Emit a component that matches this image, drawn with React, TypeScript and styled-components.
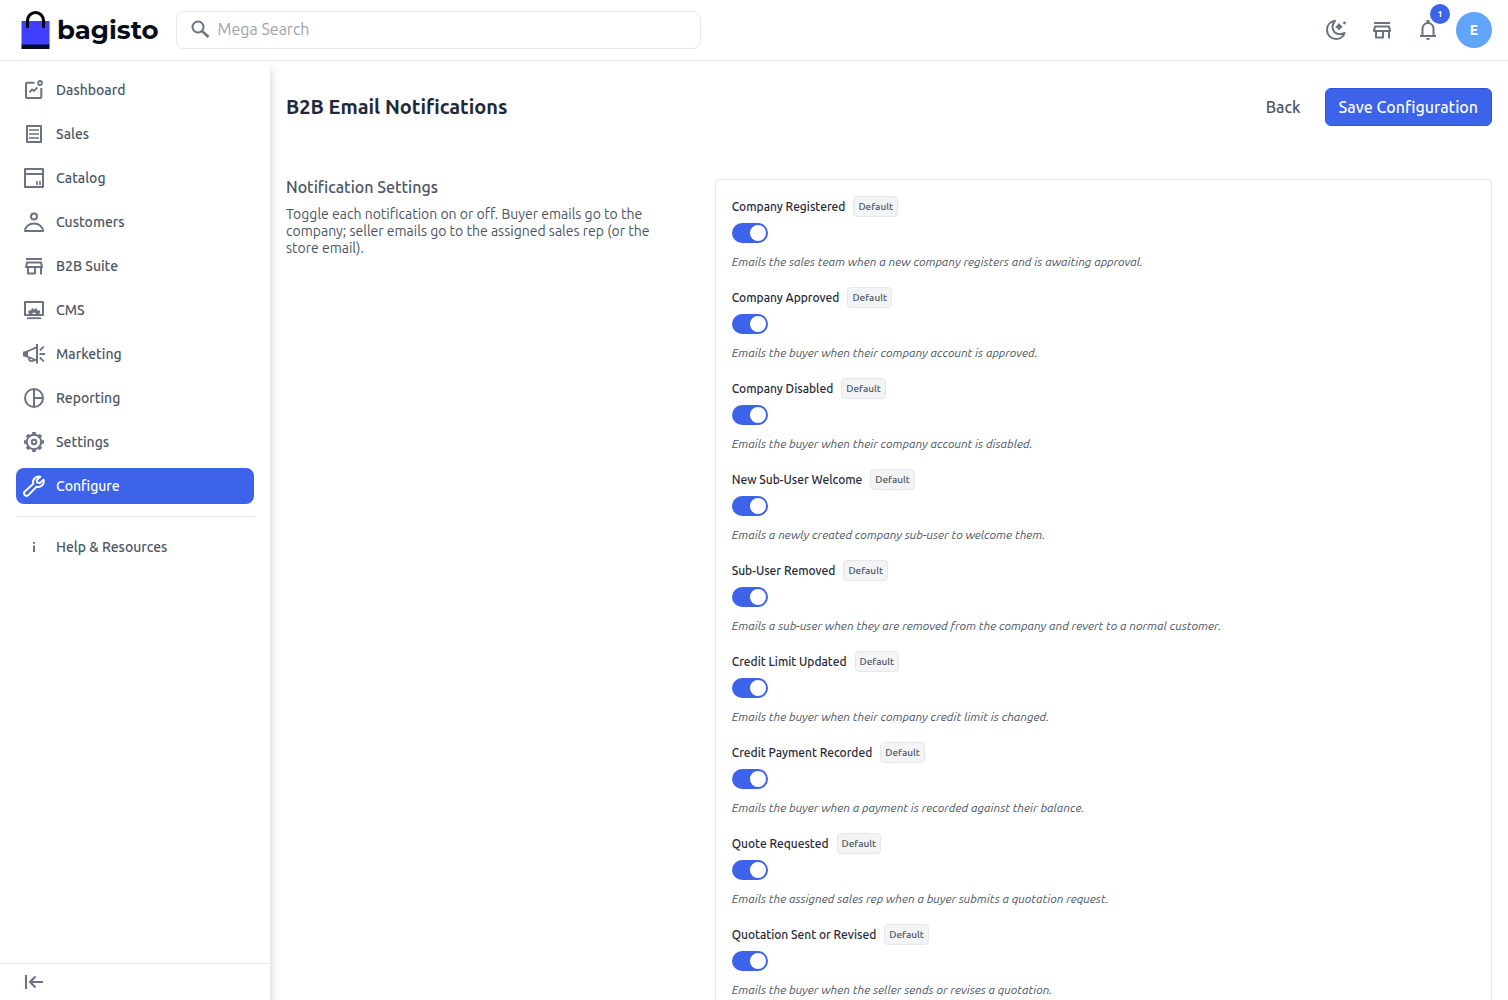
import React, { useState } from "react";
import styled, { createGlobalStyle, css } from "styled-components";

const color = {
  text: "#4b5563",
  strong: "#1f2937",
  icon: "#6b7280",
  line: "#e5e7eb",
  brand: "#3c63ea",
};

const GlobalStyle = createGlobalStyle`
  *, *::before, *::after { box-sizing: border-box; }
  body { margin: 0; background: #fff; color: ${color.text}; font-family: Ubuntu, "Open Sans", "Noto Sans", sans-serif; }
  button, input { font: inherit; color: inherit; }
  h1, h2, p, ul { margin: 0; padding: 0; }
  ul { list-style: none; }
`;

const Shell = styled.div`
  display: grid;
  grid-template-rows: auto minmax(0, 1fr);
  height: 100vh;
`;

const Header = styled.header`
  display: flex;
  align-items: center;
  justify-content: space-between;
  padding: 11px 16px;
  border-bottom: 1px solid ${color.line};
  background: #fff;
`;

const HeaderStart = styled.div`
  display: flex;
  align-items: center;
  gap: 17px;
  flex: 1;
`;

const Logo = styled.a`
  display: flex;
  align-items: center;
  gap: 7px;
  padding-left: 5px;
  color: #060c18;
  font: 700 26px/32px Montserrat, "Noto Sans", sans-serif;
  text-decoration: none;
`;

const SearchBox = styled.label`
  display: flex;
  align-items: center;
  gap: 5px;
  width: 100%;
  max-width: 525px;
  height: 38px;
  padding: 0 12px;
  border: 1px solid ${color.line};
  border-radius: 8px;
  color: ${color.icon};
`;

const SearchInput = styled.input`
  flex: 1;
  min-width: 0;
  padding: 0 0 2px;
  border: 0;
  outline: 0;
  background: transparent;
  font-size: 16px;
  line-height: 24px;
  &::placeholder { color: #9ca3af; opacity: 1; }
`;

const HeaderEnd = styled.div`
  display: flex;
  align-items: center;
  gap: 10px;
`;

const IconButton = styled.button`
  position: relative;
  display: grid;
  place-items: center;
  width: 36px;
  height: 36px;
  padding: 0;
  border: 0;
  border-radius: 6px;
  background: transparent;
  color: ${color.icon};
  cursor: pointer;
`;

const Count = styled.span`
  position: absolute;
  top: -8px;
  right: -4px;
  width: 20px;
  height: 20px;
  border-radius: 50%;
  background: ${color.brand};
  color: #fff;
  font-size: 9px;
  font-weight: 600;
  line-height: 20px;
  text-align: center;
`;

const Avatar = styled.button`
  width: 36px;
  height: 36px;
  padding: 0;
  border: 0;
  border-radius: 50%;
  background: #60a5fa;
  color: #fff;
  font-size: 14px;
  font-weight: 600;
  cursor: pointer;
`;

const Body = styled.div`
  display: grid;
  grid-template-columns: 270px minmax(0, 1fr);
`;

const Sidebar = styled.aside`
  display: flex;
  flex-direction: column;
  min-height: 0;
  background: #fff;
  box-shadow: 0 8px 10px 0 rgba(0, 0, 0, 0.2);
`;

const Nav = styled.nav`
  flex: 1;
  min-height: 0;
  overflow-y: auto;
  padding: 11px 16px;
`;

const NavList = styled.ul`
  display: grid;
  gap: 8px;
  & + & {
    margin-top: 12px;
    padding-top: 12px;
    border-top: 1px solid ${color.line};
  }
`;

const NavLink = styled.a<{ $active?: boolean }>`
  display: flex;
  align-items: center;
  gap: 10px;
  height: 36px;
  padding: 0 6px;
  border-radius: 8px;
  color: ${color.text};
  font-size: 14px;
  font-weight: 500;
  line-height: 20px;
  text-decoration: none;
  svg { color: ${color.icon}; }
  ${(p) => p.$active && css`
    background: ${color.brand};
    color: #fff;
    svg { color: #fff; }
  `}
`;

const Collapse = styled.button`
  display: flex;
  align-items: center;
  height: 37px;
  padding: 0 22px;
  border: 0;
  border-top: 1px solid ${color.line};
  background: #fff;
  color: ${color.icon};
  cursor: pointer;
`;

const Main = styled.main`
  min-height: 0;
  overflow-y: auto;
  scrollbar-width: none;
  padding: 27px 16px 24px;
`;

const TitleBar = styled.div`
  display: flex;
  align-items: center;
  justify-content: space-between;
`;

const Title = styled.h1`
  color: ${color.strong};
  font-size: 20px;
  font-weight: 600;
  line-height: 28px;
`;

const Actions = styled.div`
  display: flex;
  align-items: center;
  gap: 12px;
`;

const BackLink = styled.a`
  padding: 6px 12px;
  color: ${color.text};
  font-size: 16px;
  font-weight: 500;
  line-height: 24px;
  text-decoration: none;
`;

const SaveButton = styled.button`
  padding: 6px 13px;
  border: 1px solid #2f55dc;
  border-radius: 6px;
  background: ${color.brand};
  color: #f9fafb;
  font-size: 16px;
  font-weight: 500;
  line-height: 24px;
  cursor: pointer;
`;

const Section = styled.section`
  display: grid;
  grid-template-columns: minmax(0, 1fr) minmax(0, 2fr);
  gap: 40px;
  margin-top: 53px;
`;

const Intro = styled.div`
  display: grid;
  gap: 11px;
  align-content: start;
`;

const IntroTitle = styled.h2`
  font-size: 16px;
  font-weight: 500;
  line-height: 16px;
`;

const IntroText = styled.p`
  font-size: 14px;
  line-height: 17px;
`;

const Card = styled.div`
  display: grid;
  gap: 17px;
  padding: 16px;
  border: 1px solid ${color.line};
  border-radius: 4px;
  background: #fff;
`;

const Setting = styled.div`
  display: grid;
  gap: 6px;
  justify-items: start;
`;

const SettingHead = styled.div`
  display: flex;
  align-items: center;
  gap: 8px;
`;

const SettingLabel = styled.label`
  color: ${color.strong};
  font-size: 12px;
  font-weight: 500;
  line-height: 18px;
`;

const Tag = styled.span`
  padding: 2px 4px;
  border: 1px solid ${color.line};
  border-radius: 4px;
  background: #f3f4f6;
  font-size: 10px;
  font-weight: 500;
  line-height: 15px;
`;

const Switch = styled.input`
  appearance: none;
  width: 36px;
  height: 20px;
  margin: 0;
  padding: 2px;
  border-radius: 10px;
  background: #e5e7eb;
  cursor: pointer;
  &::before {
    content: "";
    display: block;
    width: 16px;
    height: 16px;
    border-radius: 50%;
    background: #fff;
  }
  &:checked { background: ${color.brand}; }
  &:checked::before { margin-left: 16px; }
`;

const Hint = styled.p`
  padding-top: 5px;
  font-size: 12px;
  font-style: italic;
  line-height: 16px;
`;

const Svg = ({ width = 2, children }: { width?: number; children: React.ReactNode }) => (
  <svg width="24" height="24" viewBox="0 0 24 24" fill="none" stroke="currentColor" strokeWidth={width} aria-hidden="true">
    {children}
  </svg>
);

const BagMark = () => (
  <svg width="29" height="38" viewBox="0 0 29 38" aria-hidden="true">
    <path d="M0.5 10h28v24h-28z" fill="#3f3fff" />
    <path d="M0.5 33.5h28V38h-28z" fill="#060c28" />
    <path d="M6.5 15.5V9.5a8 8 0 0 1 16 0v6" fill="none" stroke="#000" strokeWidth="3" strokeLinecap="round" />
  </svg>
);

const StoreIcon = () => (
  <Svg>
    <path d="M4 5h16M5 8.5h14l1 4.5H4zM6 13v6.5h7V13M19 13v7.5" strokeLinejoin="round" />
  </Svg>
);

const navItems: { label: string; icon: React.ReactNode }[] = [
  {
    label: "Dashboard",
    icon: (
      <Svg>
        <path d="M12.5 4.7H5a1 1 0 0 0-1 1V19a1 1 0 0 0 1 1h13.3a1 1 0 0 0 1-1V10" />
        <circle cx="18" cy="5" r="2" strokeWidth="1.8" />
        <path d="M7.5 14.3l2.6-2.8 2 1.3 3.2-3.3" strokeWidth="1.8" />
      </Svg>
    ),
  },
  {
    label: "Sales",
    icon: (
      <Svg>
        <rect x="5" y="4" width="14" height="16" strokeLinejoin="round" />
        <path d="M7 8h10M7 12h10M7 16h10" strokeWidth="1.6" />
      </Svg>
    ),
  },
  {
    label: "Catalog",
    icon: (
      <Svg>
        <rect x="3" y="3" width="18" height="18" strokeLinejoin="round" />
        <path d="M3 8h18" />
        <path d="M15 15v4M18 15v4" strokeWidth="1.6" />
      </Svg>
    ),
  },
  {
    label: "Customers",
    icon: (
      <Svg>
        <circle cx="12" cy="6.5" r="3" />
        <path d="M3 21c0-4.2 4-7.5 9-7.5s9 3.300 9 7.500z" strokeLinejoin="round" />
      </Svg>
    ),
  },
  { label: "B2B Suite", icon: <StoreIcon /> },
  {
    label: "CMS",
    icon: (
      <Svg>
        <rect x="3" y="4" width="18" height="13" strokeLinejoin="round" />
        <path d="M5 20.2h14" strokeWidth="1.8" />
        <path
          d="M7 16.5v-1.3l-1-.9.9-2 1.700.3.900-.9V10.200h1.300l.7 1h1.400l.7-1h1.300v1.500l.9.900 1.700-.3.900 2-1 .9v1.300h-3.400a2 2 0 0 0-4 0z"
          fill="currentColor"
          stroke="none"
        />
      </Svg>
    ),
  },
  {
    label: "Marketing",
    icon: (
      <Svg width={1.8}>
        <path d="M15 2v19.5" strokeWidth="2" />
        <path d="M15 5.2L5 9.5v5l10 4" />
        <path d="M7 15.5c0 2 .8 3.700 2.500 3.700 1.300 0 3-.4 3.500-1.500" />
        <path d="M1 9.8l4.8-1.3v7L1 14.200z" fill="currentColor" stroke="none" />
        <path d="M17.5 12H23M17.8 8.500l4-3.800M17.800 15.500l4 3.800" />
      </Svg>
    ),
  },
  {
    label: "Reporting",
    icon: (
      <Svg>
        <circle cx="12" cy="12" r="9" />
        <path d="M12 3v18M12 12h9" />
      </Svg>
    ),
  },
  {
    label: "Settings",
    icon: (
      <Svg>
        <circle cx="12" cy="12" r="2.2" />
        <circle cx="12" cy="12" r="7.2" />
        <path
          d="M12 2v2.500M12 19.500V22M2 12h2.500M19.500 12H22M5 5l1.800 1.800M17.200 17.200L19 19M19 5l-1.800 1.800M6.800 17.200L5 19"
          strokeWidth="3.6"
        />
      </Svg>
    ),
  },
  {
    label: "Configure",
    icon: (
      <Svg>
        <path
          strokeLinejoin="round"
          d="M18.3 2.7a5.6 5.6 0 0 0-7 7L2.8 17.6a2.3 2.3 0 0 0 0 3.500 2.300 2.300 0 0 0 3.500 0l8.200-8.300a5.700 5.700 0 0 0 7-7.200l-3.600 3.500-2.700-.5-.5-2.500z"
        />
      </Svg>
    ),
  },
];

const notifications: [string, string][] = [
  ["Company Registered", "Emails the sales team when a new company registers and is awaiting approval."],
  ["Company Approved", "Emails the buyer when their company account is approved."],
  ["Company Disabled", "Emails the buyer when their company account is disabled."],
  ["New Sub-User Welcome", "Emails a newly created company sub-user to welcome them."],
  ["Sub-User Removed", "Emails a sub-user when they are removed from the company and revert to a normal customer."],
  ["Credit Limit Updated", "Emails the buyer when their company credit limit is changed."],
  ["Credit Payment Recorded", "Emails the buyer when a payment is recorded against their balance."],
  ["Quote Requested", "Emails the assigned sales rep when a buyer submits a quotation request."],
  ["Quotation Sent or Revised", "Emails the buyer when the seller sends or revises a quotation."],
];

function NotificationSetting({ name, hint }: { name: string; hint: string }) {
  const [on, setOn] = useState(true);
  const id = name.toLowerCase().replace(/\s+/g, "-");
  return (
    <Setting>
      <SettingHead>
        <SettingLabel htmlFor={id}>{name}</SettingLabel>
        <Tag>Default</Tag>
      </SettingHead>
      <Switch id={id} type="checkbox" role="switch" checked={on} onChange={() => setOn(!on)} />
      <Hint>{hint}</Hint>
    </Setting>
  );
}

export default function App() {
  return (
    <Shell>
      <GlobalStyle />
      <Header>
        <HeaderStart>
          <Logo href="#">
            <BagMark />
            bagisto
          </Logo>
          <SearchBox>
            <Svg>
              <circle cx="9" cy="9" r="5.5" />
              <path d="M13 13l6.5 6" strokeWidth="2.6" />
            </Svg>
            <SearchInput type="text" placeholder="Mega Search" aria-label="Mega Search" />
          </SearchBox>
        </HeaderStart>
        <HeaderEnd>
          <IconButton aria-label="Toggle dark mode">
            <Svg>
              <path
                d="M11 2.8C5.8 3.6 3 7.6 3 12c0 5 4 9 9 9 4 0 7.400-2.400 8.600-6-3.500 1.800-7.400 1.400-10-.8C7.800 11.600 7.500 7 11 2.800z"
                strokeLinejoin="round"
              />
              <path d="M15 5l1.700 2.100L18.800 8.800l-2.100 1.700L15 12.600l-1.700-2.100-2.100-1.700 2.100-1.700z" fill="currentColor" stroke="none" />
              <circle cx="20.5" cy="5" r="1.4" fill="currentColor" stroke="none" />
            </Svg>
          </IconButton>
          <IconButton aria-label="Visit shop">
            <StoreIcon />
          </IconButton>
          <IconButton aria-label="Notifications">
            <Svg>
              <path d="M4 18h16M6.500 18v-7.500a5.500 5.500 0 0 1 11 0V18" />
              <path d="M12 2v3" strokeWidth="3" />
              <path d="M10 20h4a2 2 0 0 1-4 0z" fill="currentColor" stroke="none" />
            </Svg>
            <Count>1</Count>
          </IconButton>
          <Avatar aria-label="Account">E</Avatar>
        </HeaderEnd>
      </Header>
      <Body>
        <Sidebar>
          <Nav aria-label="Main">
            <NavList>
              {navItems.map((item) => (
                <li key={item.label}>
                  <NavLink href="#" $active={item.label === "Configure"}>
                    {item.icon}
                    {item.label}
                  </NavLink>
                </li>
              ))}
            </NavList>
            <NavList>
              <li>
                <NavLink href="#">
                  <Svg>
                    <path d="M12 10.5V17M12 7v1.800" />
                  </Svg>
                  Help &amp; Resources
                </NavLink>
              </li>
            </NavList>
          </Nav>
          <Collapse aria-label="Collapse sidebar">
            <Svg>
              <path d="M4 5v14M21 12H8.500M13.500 6.500L8 12l5.500 5.500" />
            </Svg>
          </Collapse>
        </Sidebar>
        <Main>
          <TitleBar>
            <Title>B2B Email Notifications</Title>
            <Actions>
              <BackLink href="#">Back</BackLink>
              <SaveButton type="button">Save Configuration</SaveButton>
            </Actions>
          </TitleBar>
          <Section>
            <Intro>
              <IntroTitle>Notification Settings</IntroTitle>
              <IntroText>
                Toggle each notification on or off. Buyer emails go to the company; seller emails go to the assigned
                sales rep (or the store email).
              </IntroText>
            </Intro>
            <Card>
              {notifications.map(([name, hint]) => (
                <NotificationSetting key={name} name={name} hint={hint} />
              ))}
            </Card>
          </Section>
        </Main>
      </Body>
    </Shell>
  );
}
